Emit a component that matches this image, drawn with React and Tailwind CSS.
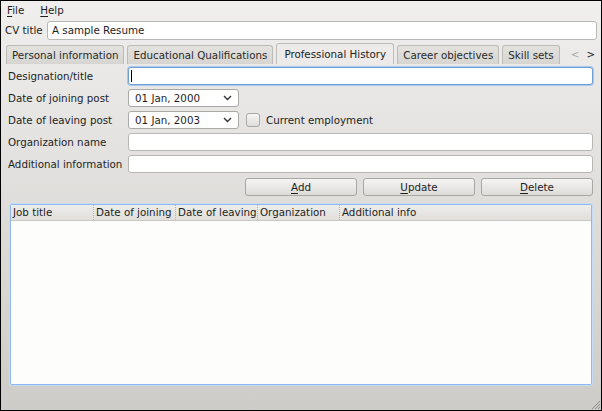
import React from "react";

const U = ({ c, rest }) => (
  <span className="whitespace-nowrap">
    <span className="underline underline-offset-2">{c}</span>
    {rest}
  </span>
);

function Chevron() {
  return (
    <svg width="9" height="6" viewBox="0 0 9 6" className="shrink-0">
      <path d="M1 1 L4.5 4.5 L8 1" fill="none" stroke="#333" strokeWidth="1.4" />
    </svg>
  );
}

function Combo({ value }) {
  return (
    <div className="w-[111px] h-[18px] bg-white border border-[#a9a9a5] rounded-[3px] flex items-center pl-[6px] pr-[6px] justify-between whitespace-nowrap">
      <span>{value}</span>
      <Chevron />
    </div>
  );
}

function Field({ focus }) {
  return (
    <div
      className={
        "flex-1 h-[18px] bg-white rounded-[3px] border " +
        (focus ? "border-[#6f9fd6] shadow-[0_0_0_1px_#a9c8ec] flex items-center pl-[2px]" : "border-[#b7b7b3]")
      }
    >
      {focus && <div className="w-px h-[12px] bg-black" />}
    </div>
  );
}

function Tab({ label, active }) {
  return (
    <div
      className={
        "flex items-center border border-b-0 rounded-t-[3px] whitespace-nowrap " +
        (active
          ? "px-[7px] h-[21px] bg-[#ecebe9] border-[#bebdb9] text-[#222]"
          : "px-[5px] h-[19px] bg-gradient-to-b from-[#e3e2df] to-[#d6d5d2] border-[#bcbbb7] text-[#2a2a2a]")
      }
    >
      {label}
    </div>
  );
}

function Btn({ c, rest }) {
  return (
    <div className="w-[112px] h-[18px] rounded-[3px] border border-[#a8a7a3] bg-gradient-to-b from-[#f4f4f2] to-[#dddcd9] flex items-center justify-center">
      <U c={c} rest={rest} />
    </div>
  );
}

function Row({ label, children }) {
  return (
    <div className="flex items-center h-[22px]">
      <div className="w-[120px] shrink-0 whitespace-nowrap">{label}</div>
      {children}
    </div>
  );
}

export default function App() {
  const cols = ["Job title", "Date of joining", "Date of leaving", "Organization", "Additional info"];
  return (
    <div
      className="w-[602px] h-[411px] border border-black bg-gradient-to-b from-[#f0efed] to-[#cdccc9] text-[#1e1e1e] text-[10.3px] leading-none relative overflow-hidden flex flex-col"
      style={{ fontFamily: '"DejaVu Sans", "Liberation Sans", sans-serif' }}
    >
      {/* menu bar */}
      <div className="h-[18px] flex items-center pl-[6px] gap-[16px] pt-[1px]">
        <U c="F" rest="ile" />
        <U c="H" rest="elp" />
      </div>
      {/* CV title */}
      <div className="flex items-center h-[23px] pl-[4px] pr-[4px]">
        <span className="w-[42px] whitespace-nowrap">CV title</span>
        <div className="flex-1 h-[19px] bg-white border border-[#b7b7b3] rounded-[3px] flex items-center pl-[4px] whitespace-nowrap">
          A sample Resume
        </div>
      </div>
      {/* tabs */}
      <div className="flex items-end gap-[3px] pl-[5px] h-[22px]">
        <Tab label="Personal information" />
        <Tab label="Educational Qualifications" />
        <Tab label="Professional History" active />
        <Tab label="Career objectives" />
        <Tab label="Skill sets" />
        <div className="flex items-center gap-[7px] h-[19px] pl-[8px]">
          <span className="text-[#aaa]">&lt;</span>
          <span className="text-[#222]">&gt;</span>
        </div>
      </div>
      {/* form */}
      <div className="flex flex-col pl-[7px] pr-[8px] pt-[1px]">
        <Row label="Designation/title">
          <Field focus />
        </Row>
        <Row label="Date of joining post">
          <Combo value="01 Jan, 2000" />
        </Row>
        <Row label="Date of leaving post">
          <Combo value="01 Jan, 2003" />
          <div className="ml-[7px] w-[14px] h-[14px] rounded-[3px] border border-[#a9a8a4] bg-gradient-to-b from-[#f6f6f4] to-[#dedddb]" />
          <span className="ml-[6px] whitespace-nowrap">Current employment</span>
        </Row>
        <Row label="Organization name">
          <Field />
        </Row>
        <Row label="Additional information">
          <Field />
        </Row>
        <div className="flex justify-end gap-[6px] h-[22px] items-center mt-[1px]">
          <Btn c="A" rest="dd" />
          <Btn c="U" rest="pdate" />
          <Btn c="D" rest="elete" />
        </div>
      </div>
      {/* table */}
      <div className="mx-[9px] mt-[6px] h-[181px] border border-[#8fb9ec] rounded-[2px] bg-white flex flex-col shadow-[0_0_0_1px_#c5dcf5]">
        <div className="h-[16px] bg-gradient-to-b from-[#ededeb] to-[#e0dfdc] border-b border-[#c9c8c4] flex items-center">
          {cols.map((c, i) => (
            <div
              key={c}
              className={
                "w-[82px] h-full flex items-center pl-[2px] overflow-hidden whitespace-nowrap " +
                (i > 0 ? "border-l border-dotted border-[#b5b4b0]" : "")
              }
            >
              {c}
            </div>
          ))}
          <div className="flex-1" />
        </div>
        <div className="flex-1 bg-[#fdfdfc]" />
      </div>
      {/* size grip */}
      <svg className="absolute right-0 bottom-0" width="11" height="11" viewBox="0 0 11 11">
        <path d="M10 2 L2 10 M10 5 L5 10 M10 8 L8 10" stroke="#8a8985" strokeWidth="1" />
      </svg>
    </div>
  );
}
